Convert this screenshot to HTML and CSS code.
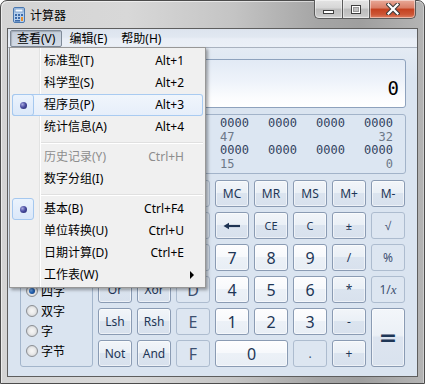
FILE: index.html
```html
<!DOCTYPE html>
<html lang="zh-CN">
<head>
<meta charset="utf-8">
<title>计算器</title>
<link rel="stylesheet" href="styles.css">
</head>
<body>
<div class="window">
  <div class="titlebar">
    <svg class="app-icon" width="14" height="16" viewBox="0 0 14 16">
      <rect x="1.5" y="0.5" width="11" height="15" rx="1.5" fill="#b6cfec" stroke="#4a78b0"/>
      <rect x="3" y="2" width="8" height="3" fill="#f4f9ff" stroke="#6d94c4" stroke-width="0.8"/>
      <rect x="3" y="7" width="2" height="2" fill="#3c6aa9"/>
      <rect x="6" y="7" width="2" height="2" fill="#3c6aa9"/>
      <rect x="9" y="7" width="2" height="2" fill="#3c6aa9"/>
      <rect x="3" y="10" width="2" height="2" fill="#3c6aa9"/>
      <rect x="6" y="10" width="2" height="2" fill="#3c6aa9"/>
      <rect x="9" y="10" width="2" height="4" fill="#e8902e"/>
      <rect x="3" y="13" width="5" height="1.6" fill="#3c6aa9"/>
    </svg>
    <span class="title">计算器</span>
    <div class="caption">
      <div class="cap cap-min"><span class="min-bar"></span></div>
      <div class="cap cap-max"><span class="max-box"></span></div>
      <div class="cap cap-close">
        <svg width="14" height="12" viewBox="0 0 14 12">
          <path d="M2.5 1.5 L11.5 10.5 M11.5 1.5 L2.5 10.5" stroke="#3b3b3b" stroke-width="4.2" stroke-linecap="square"/>
          <path d="M2.5 1.5 L11.5 10.5 M11.5 1.5 L2.5 10.5" stroke="#ffffff" stroke-width="2.2" stroke-linecap="square"/>
        </svg>
      </div>
    </div>
  </div>

  <div class="client">
    <div class="menubar">
      <span class="mb-item open">查看(V)</span>
      <span class="mb-item">编辑(E)</span>
      <span class="mb-item">帮助(H)</span>
    </div>

    <div class="content">
      <div class="display"><span class="value">0</span></div>

      <div class="binary">
        <span class="grp">0000</span><span class="grp">0000</span><span class="grp">0000</span><span class="grp">0000</span>
        <span class="grp">0000</span><span class="grp">0000</span><span class="grp">0000</span><span class="grp">0000</span>
        <span class="lbl c1">63</span><span class="lbl c5">47</span><span class="lbl c8">32</span>
        <span class="grp">0000</span><span class="grp">0000</span><span class="grp">0000</span><span class="grp">0000</span>
        <span class="grp">0000</span><span class="grp">0000</span><span class="grp">0000</span><span class="grp">0000</span>
        <span class="lbl c1">31</span><span class="lbl c5">15</span><span class="lbl c8">0</span>
      </div>

      <div class="lower">
        <div class="left-col">
          <div class="group group-base">
            <div class="radio-row"><span class="radio"></span>十六进制</div>
            <div class="radio-row"><span class="radio checked"></span>十进制</div>
            <div class="radio-row"><span class="radio"></span>八进制</div>
            <div class="radio-row"><span class="radio"></span>二进制</div>
          </div>
          <div class="group group-size">
            <div class="radio-row"><span class="radio checked"></span>四字</div>
            <div class="radio-row"><span class="radio"></span>双字</div>
            <div class="radio-row"><span class="radio"></span>字</div>
            <div class="radio-row"><span class="radio"></span>字节</div>
          </div>
        </div>

        <div class="keys">
          <div class="key">Quot</div><div class="key">Mod</div><div class="key off big">A</div>
          <div class="key">MC</div><div class="key">MR</div><div class="key">MS</div><div class="key">M+</div><div class="key">M-</div>

          <div class="key">(</div><div class="key">)</div><div class="key off big">B</div>
          <div class="key">
            <svg width="18" height="8" viewBox="0 0 18 8"><path d="M5 4 H17" stroke="#1f3453" stroke-width="2.2"/><path d="M0.5 4 L6 0.8 L6 7.2 Z" fill="#1f3453"/></svg>
          </div>
          <div class="key small">CE</div><div class="key small">C</div><div class="key small">±</div><div class="key off">√</div>

          <div class="key small">RoL</div><div class="key small">RoR</div><div class="key off big">C</div>
          <div class="key digit">7</div><div class="key digit">8</div><div class="key digit">9</div><div class="key">/</div><div class="key off">%</div>

          <div class="key">Or</div><div class="key">Xor</div><div class="key off big">D</div>
          <div class="key digit">4</div><div class="key digit">5</div><div class="key digit">6</div><div class="key">*</div><div class="key off">1/<i>x</i></div>

          <div class="key">Lsh</div><div class="key">Rsh</div><div class="key off big">E</div>
          <div class="key digit">1</div><div class="key digit">2</div><div class="key digit">3</div><div class="key">-</div>
          <div class="key equals">=</div>

          <div class="key">Not</div><div class="key">And</div><div class="key off big">F</div>
          <div class="key digit zero">0</div><div class="key off">.</div><div class="key">+</div>
        </div>
      </div>
    </div>

    <div class="dropdown">
      <div class="mi"><span class="check"></span><span class="label">标准型(T)</span><span class="sc">Alt+1</span></div>
      <div class="mi"><span class="check"></span><span class="label">科学型(S)</span><span class="sc">Alt+2</span></div>
      <div class="mi hover"><span class="check on"><span class="dot"></span></span><span class="label">程序员(P)</span><span class="sc">Alt+3</span></div>
      <div class="mi"><span class="check"></span><span class="label">统计信息(A)</span><span class="sc">Alt+4</span></div>
      <div class="sep"></div>
      <div class="mi disabled"><span class="check"></span><span class="label">历史记录(Y)</span><span class="sc">Ctrl+H</span></div>
      <div class="mi"><span class="check"></span><span class="label">数字分组(I)</span></div>
      <div class="sep"></div>
      <div class="mi"><span class="check on"><span class="dot"></span></span><span class="label">基本(B)</span><span class="sc">Ctrl+F4</span></div>
      <div class="mi"><span class="check"></span><span class="label">单位转换(U)</span><span class="sc">Ctrl+U</span></div>
      <div class="mi"><span class="check"></span><span class="label">日期计算(D)</span><span class="sc">Ctrl+E</span></div>
      <div class="mi"><span class="check"></span><span class="label">工作表(W)</span><span class="arrow"></span></div>
    </div>
  </div>
</div>
</body>
</html>
```

FILE: styles.css
```css
* { box-sizing: border-box; }
html, body { margin: 0; padding: 0; }
body {
  width: 425px;
  height: 384px;
  overflow: hidden;
  background: #ffffff;
  font-family: "Noto Sans", "Noto Sans CJK SC", sans-serif;
  font-size: 12px;
  color: #000;
}

.window {
  position: relative;
  width: 425px;
  height: 384px;
  border: 1px solid #4c4c4c;
  border-radius: 7px 7px 0 0;
  padding: 0 6px 6px;
  display: flex;
  flex-direction: column;
  background: linear-gradient(to right, #d4d4d4 0%, #d8d8d8 30%, #c4c4c4 55%, #a5a5a5 75%, #9f9f9f 85%, #b4b4b4 100%);
  box-shadow: inset 1px 1px 0 rgba(255,255,255,0.55), inset -1px 0 0 rgba(255,255,255,0.35);
}

/* title bar */
.titlebar {
  height: 27px;
  display: flex;
  align-items: center;
  flex-shrink: 0;
}
.app-icon { margin-left: 5px; flex-shrink: 0; }
.title {
  margin-left: 4px;
  font-family: "Noto Sans CJK SC", sans-serif;
  font-size: 12px;
  line-height: 14px;
  color: #000;
}
.caption {
  margin-left: auto;
  margin-right: 2px;
  align-self: flex-start;
  margin-top: -1px;
  display: flex;
  height: 19px;
}
.cap {
  height: 19px;
  border: 1px solid #5a5a5a;
  border-top: none;
  display: flex;
  align-items: center;
  justify-content: center;
  box-shadow: inset 0 0 0 1px rgba(255,255,255,0.45);
}
.cap-min {
  width: 28px;
  border-right: none;
  border-bottom-left-radius: 5px;
  background: linear-gradient(#e4e4e4 0%, #d6d6d6 45%, #bcbcbc 50%, #c6c6c6 85%, #d6d6d6 100%);
}
.cap-max {
  width: 27px;
  border-right: none;
  background: linear-gradient(#e4e4e4 0%, #d6d6d6 45%, #bcbcbc 50%, #c6c6c6 85%, #d6d6d6 100%);
}
.cap-close {
  width: 47px;
  border-bottom-right-radius: 5px;
  background: linear-gradient(#e8a999 0%, #d97d65 45%, #c4401f 50%, #cc5535 80%, #de8064 100%);
}
.min-bar {
  width: 11px;
  height: 4px;
  margin-top: 6px;
  background: #ffffff;
  border: 1px solid #3e3e3e;
}
.max-box {
  width: 10px;
  height: 9px;
  margin-top: 0;
  border: 1px solid #3e3e3e;
  background: #bfbfbf;
  box-shadow: inset 0 0 0 1px #ffffff, inset 0 0 0 2px #9a9a9a;
}

/* client */
.client {
  position: relative;
  flex: 1;
  border: 1px solid #5e5e5e;
  background: #dae4f0;
  display: flex;
  flex-direction: column;
}
.menubar {
  height: 19px;
  flex-shrink: 0;
  border-bottom: 1px solid #a9b2bf;
  background: linear-gradient(#dde4ee 0%, #e1e8f1 45%, #e9eef6 55%, #ebf0f7 100%);
  display: flex;
  align-items: flex-start;
  padding-left: 2px;
}
.mb-item {
  margin-top: 1px;
  height: 17px;
  line-height: 15px;
  padding: 0 6px;
  border: 1px solid transparent;
  border-radius: 2px;
  font-family: "Noto Sans", "Noto Sans CJK SC", sans-serif;
  font-size: 12px;
}
.mb-item.open {
  border-color: #7f8a98;
  background: linear-gradient(#c4cedb, #d3dbe6);
  box-shadow: inset 1px 1px 1px rgba(0,0,0,0.18);
}

.content {
  flex: 1;
  padding: 11px 11px 0 12px;
  display: flex;
  flex-direction: column;
  gap: 6px;
  background: linear-gradient(#e4ebf4 0px, #dae4f0 30px);
}

.display {
  height: 49px;
  border: 1px solid #8ea2bd;
  border-radius: 3px;
  background: linear-gradient(#e2eaf5 0%, #eef3fa 45%, #fbfcfe 80%, #ffffff 100%);
  display: flex;
  justify-content: flex-end;
  align-items: flex-end;
  padding: 0 6px 9px;
}
.value {
  font-family: "DejaVu Sans Mono", monospace;
  font-size: 19px;
  line-height: 19px;
  color: #000;
}

.binary {
  height: 60px;
  border: 1px solid #a2b3c9;
  border-radius: 3px;
  background: #dce6f2;
  padding: 2px 11px 0 7px;
  display: grid;
  grid-template-columns: repeat(8, 29px);
  column-gap: 19px;
  grid-auto-rows: 13.5px;
  font-family: "DejaVu Sans Mono", monospace;
  font-size: 12px;
  line-height: 13.5px;
}
.grp { color: #334360; }
.lbl { color: #6d7888; }
.lbl.c1 { grid-column: 1; }
.lbl.c5 { grid-column: 5; }
.lbl.c8 { grid-column: 8; justify-self: end; }

.lower {
  display: flex;
  gap: 5px;
}
.left-col {
  width: 73px;
  display: flex;
  flex-direction: column;
  gap: 6px;
}
.group {
  border: 1px solid #a3b5cb;
  border-radius: 3px;
  padding: 0 0 0 5px;
}
.group-base { height: 94px; padding-top: 4px; }
.group-size { height: 87px; }
.radio-row {
  height: 20px;
  display: flex;
  align-items: center;
  gap: 3px;
  font-family: "Noto Sans CJK SC", sans-serif;
  font-size: 12px;
  line-height: 14px;
  white-space: nowrap;
}
.radio {
  position: relative;
  width: 12px;
  height: 12px;
  border-radius: 50%;
  border: 1px solid #8c8f93;
  background: radial-gradient(circle at 50% 50%, #f7f7f7 0%, #eaeaea 45%, #cfd1d4 80%);
  flex-shrink: 0;
}
.radio.checked::after {
  content: "";
  position: absolute;
  left: 2px;
  top: 2px;
  width: 6px;
  height: 6px;
  border-radius: 50%;
  background: radial-gradient(circle at 35% 35%, #6fa6e6 0%, #2362b3 45%, #0e336f 100%);
}

.keys {
  display: grid;
  grid-template-columns: repeat(8, 34px);
  grid-auto-rows: 27px;
  gap: 5px;
}
.key {
  border: 1px solid #8a9bb3;
  border-radius: 3px;
  background: linear-gradient(#f2f5f9 0%, #eaf0f6 46%, #dbe4ef 50%, #d8e1ed 100%);
  color: #1e3656;
  font-family: "Noto Sans", sans-serif;
  font-size: 12px;
  line-height: 14px;
  display: flex;
  align-items: center;
  justify-content: center;
  box-shadow: inset 0 0 0 1px rgba(255,255,255,0.55);
}
.key.small { font-size: 11px; }
.key.digit {
  background: linear-gradient(#fdfdfe 0%, #f7f9fc 46%, #ecf1f7 50%, #e8eef5 100%);
  font-size: 16px;
  line-height: 18px;
}
.key.big { font-size: 16px; line-height: 18px; }
.key.off {
  border-color: #adbccf;
  background: #dde6f1;
  box-shadow: none;
  color: #3d5070;
}
.key.off i { font-family: "Liberation Serif", serif; font-size: 13px; }
.key.zero { grid-column: span 2; }
.key.equals {
  grid-column: 8;
  grid-row: 5 / span 2;
  font-family: "DejaVu Sans", sans-serif;
  font-weight: bold;
  font-size: 22px;
  background: linear-gradient(#f3f6fa 0%, #ebf0f6 46%, #dde5f0 50%, #d9e2ee 100%);
}

/* dropdown menu */
.dropdown {
  position: absolute;
  left: 1px;
  top: 18px;
  width: 197px;
  border: 1px solid #979797;
  background: #f0f0f0;
  padding: 2px 2px 1px 2px;
  box-shadow: 2px 2px 3px rgba(0,0,0,0.35);
  font-family: "Noto Sans", "Noto Sans CJK SC", sans-serif;
  font-size: 12px;
  z-index: 5;
}
.dropdown::before {
  content: "";
  position: absolute;
  left: 29px;
  top: 0;
  bottom: 0;
  width: 1px;
  background: #e2e3e3;
  box-shadow: 1px 0 0 #ffffff;
}
.mi {
  position: relative;
  height: 22px;
  display: flex;
  align-items: center;
  border-radius: 3px;
  line-height: 14px;
}
.mi.hover {
  background: linear-gradient(#f1f6fc, #e6eefa);
  box-shadow: inset 0 0 0 1px #a9cbf1;
}
.check {
  width: 22px;
  height: 22px;
  flex-shrink: 0;
  display: flex;
  align-items: center;
  justify-content: center;
}
.check.on {
  border: 1px solid #a5c8ef;
  border-radius: 3px;
  background: linear-gradient(#ebf3fd, #dbe8f9);
}
.dot {
  width: 7px;
  height: 7px;
  border-radius: 50%;
  background: radial-gradient(circle at 35% 35%, #a7a9e0 0%, #4c4fa2 45%, #1d1f62 100%);
}
.label { margin-left: 10px; position: relative; z-index: 1; }
.sc { margin-left: auto; padding-right: 19px; }
.mi.disabled { color: #8d8d8d; }
.arrow {
  margin-left: auto;
  margin-right: 9px;
  width: 0;
  height: 0;
  border-left: 4px solid #000;
  border-top: 4px solid transparent;
  border-bottom: 4px solid transparent;
}
.sep {
  height: 8px;
  margin-left: 28px;
  padding-top: 4px;
}
.sep::before {
  content: "";
  display: block;
  height: 1px;
  background: #e0e0e0;
  box-shadow: 0 1px 0 #ffffff;
}
```
